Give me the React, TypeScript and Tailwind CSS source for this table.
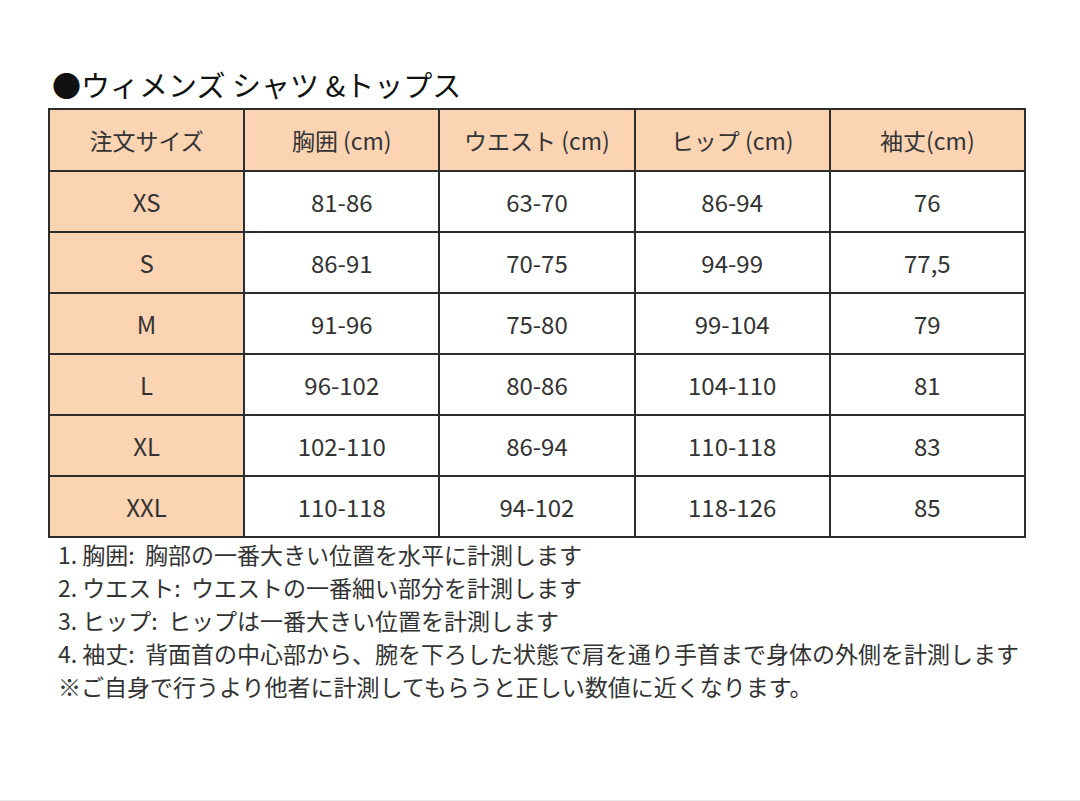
import React from "react";

const header = ["注文サイズ", "胸囲 (cm)", "ウエスト (cm)", "ヒップ (cm)", "袖丈(cm)"];

const rows = [
  ["XS", "81-86", "63-70", "86-94", "76"],
  ["S", "86-91", "70-75", "94-99", "77,5"],
  ["M", "91-96", "75-80", "99-104", "79"],
  ["L", "96-102", "80-86", "104-110", "81"],
  ["XL", "102-110", "86-94", "110-118", "83"],
  ["XXL", "110-118", "94-102", "118-126", "85"],
];

const notes = [
  "1. 胸囲:  胸部の一番大きい位置を水平に計測します",
  "2. ウエスト:  ウエストの一番細い部分を計測します",
  "3. ヒップ:  ヒップは一番大きい位置を計測します",
  "4. 袖丈:  背面首の中心部から、腕を下ろした状態で肩を通り手首まで身体の外側を計測します",
  "※ご自身で行うより他者に計測してもらうと正しい数値に近くなります。",
];

export default function App() {
  return (
    <div
      className="w-[1080px] h-[801px] bg-white border-b border-[#e8e8e8] text-[#333] overflow-hidden"
      style={{ fontFamily: '"Noto Sans CJK JP", "Noto Sans", sans-serif' }}
    >
      <div className="pl-[48px] pt-[64px]">
        {/* タイトル */}
        <h1 className="h-[40px] leading-[40px] text-[29px] text-[#111] pl-[4px]">
          ●ウィメンズ シャツ &amp;トップス
        </h1>

        <table className="mt-[4px] w-[978px] table-fixed border-collapse border-2 border-[#2d2d2d]">
          <thead>
            <tr className="bg-[#fbd4b4]">
              {header.map((h) => (
                <th
                  key={h}
                  className="h-[62px] border-2 border-[#2d2d2d] text-[23px] font-normal text-center"
                >
                  {h}
                </th>
              ))}
            </tr>
          </thead>
          <tbody>
            {rows.map((r) => (
              <tr key={r[0]}>
                {r.map((c, i) => (
                  <td
                    key={i}
                    className={`h-[61px] border-2 border-[#2d2d2d] text-[24px] text-center ${i === 0 ? "bg-[#fbd4b4]" : "bg-white"}`}
                  >
                    {c}
                  </td>
                ))}
              </tr>
            ))}
          </tbody>
        </table>

        {/* 注意書き */}
        <div className="pl-[10px] text-[23px] leading-[33px]">
          {notes.map((n) => (
            <p key={n} className="whitespace-pre">{n}</p>
          ))}
        </div>
      </div>
    </div>
  );
}
